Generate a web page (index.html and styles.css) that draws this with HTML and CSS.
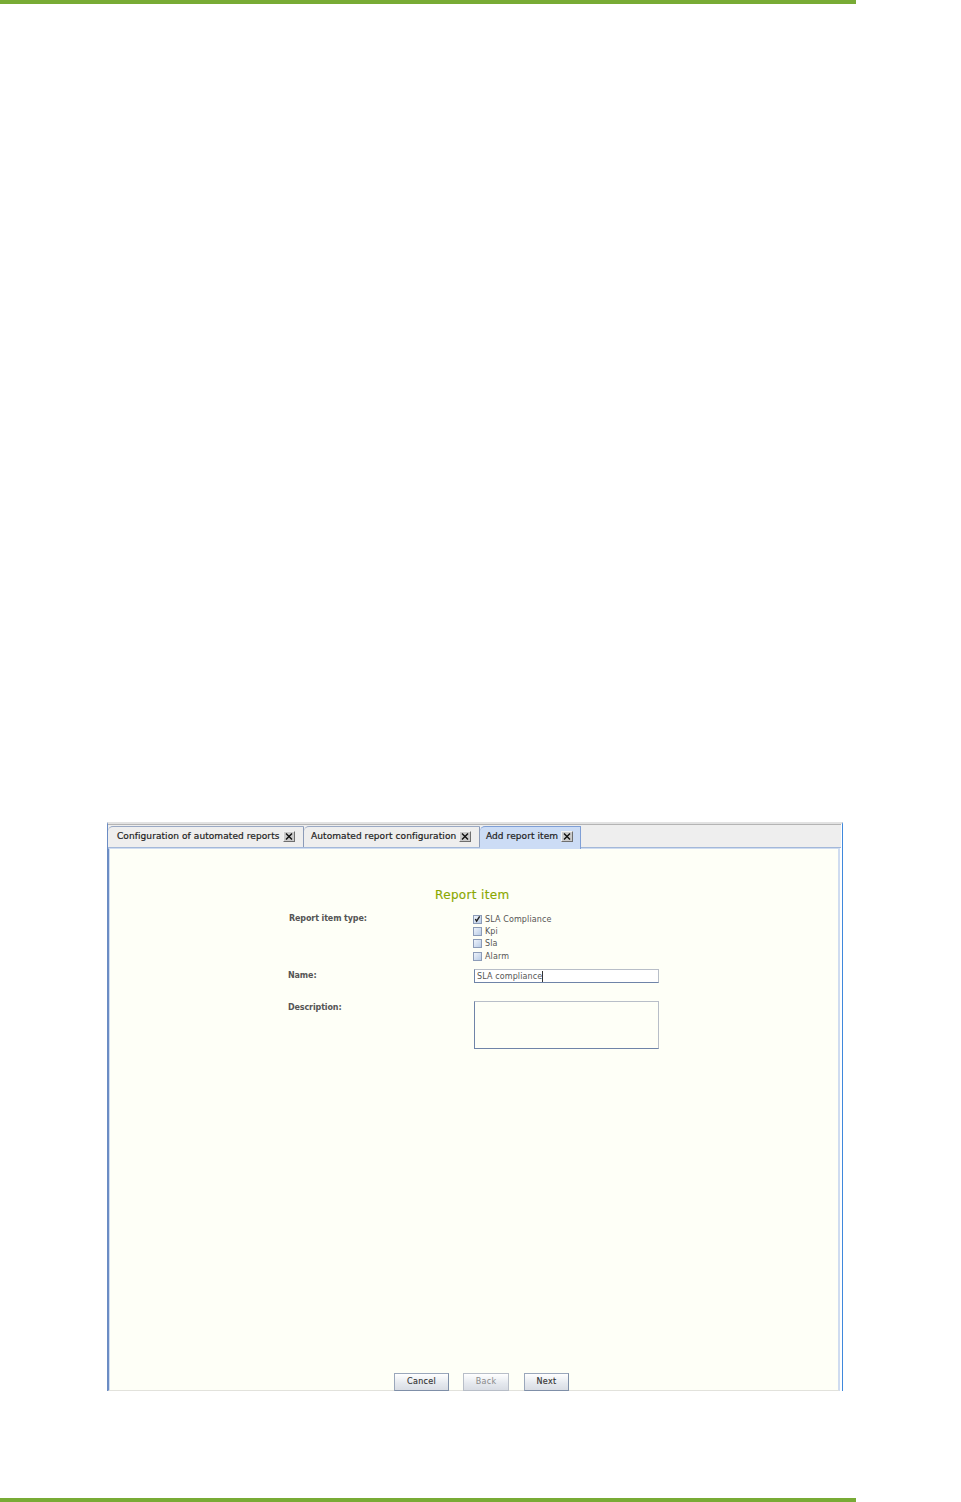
FILE: index.html
```html
<!DOCTYPE html>
<html lang="en">
<head>
<meta charset="utf-8">
<title>Report item</title>
<link rel="stylesheet" href="styles.css">
</head>
<body>
<div class="page">
  <div class="rule"></div>
  <div class="window">
    <div class="tabstrip">
      <div class="tab tab-first"><span class="tab-label">Configuration of automated reports</span><span class="close"><svg width="8" height="7" viewBox="0 0 8 7"><path d="M1 .5 7 6.5M7 .5 1 6.5" fill="none" stroke="#111" stroke-width="1.4"/></svg></span></div>
      <div class="tab tab-second"><span class="tab-label">Automated report configuration</span><span class="close"><svg width="8" height="7" viewBox="0 0 8 7"><path d="M1 .5 7 6.5M7 .5 1 6.5" fill="none" stroke="#111" stroke-width="1.4"/></svg></span></div>
      <div class="tab tab-active"><span class="tab-label">Add report item</span><span class="close"><svg width="8" height="7" viewBox="0 0 8 7"><path d="M1 .5 7 6.5M7 .5 1 6.5" fill="none" stroke="#111" stroke-width="1.4"/></svg></span></div>
    </div>
    <div class="panel">
      <h1 class="title">Report item</h1>
      <div class="form">
        <div class="row row-type">
          <div class="label">Report item type:</div>
          <div class="checks">
            <div class="check"><span class="box box-on"><svg width="8" height="8" viewBox="0 0 8 8"><path d="M1.5 4 3 6.5 6.5 1" fill="none" stroke="#222" stroke-width="1.6"/></svg></span>SLA Compliance</div>
            <div class="check"><span class="box"></span>Kpi</div>
            <div class="check"><span class="box"></span>Sla</div>
            <div class="check"><span class="box"></span>Alarm</div>
          </div>
        </div>
        <div class="row row-name">
          <div class="label">Name:</div>
          <div class="input"><span>SLA compliance</span></div>
        </div>
        <div class="row row-desc">
          <div class="label">Description:</div>
          <div class="textarea"></div>
        </div>
      </div>
      <div class="buttons">
        <div class="btn btn-cancel">Cancel</div>
        <div class="btn btn-back">Back</div>
        <div class="btn btn-next">Next</div>
      </div>
    </div>
  </div>
  <div class="rule"></div>
</div>
</body>
</html>
```
FILE: styles.css
```css
* { box-sizing: border-box; }
html, body { margin: 0; padding: 0; background: #fff; }
body { font-family: "DejaVu Sans", sans-serif; font-size: 9px; color: #333; }
.page { height: 1502px; width: 961px; display: flex; flex-direction: column; overflow: hidden; }
.rule { height: 4px; width: 856px; background: #78ab35; flex: none; }
.window {
  margin: 818px 0 107px 107px;
  width: 736px;
  height: 569px;
  flex: none;
  display: flex;
  flex-direction: column;
  border-top: 2px solid #e2e2e2;
  border-left: 1px solid #6b8cc4;
  border-right: 1px solid #3f88dc;
}
.tabstrip {
  height: 24px;
  flex: none;
  display: flex;
  align-items: flex-start;
  background: #eee;
  border-top: 1px solid #b4b4b4;
  border-bottom: 1px solid #a3b8d9;
  margin-right: 1px;
  padding-top: 1px;
  position: relative;
}
.tab {
  height: 21px;
  flex: none;
  display: flex;
  align-items: center;
  padding-bottom: 2px;
  white-space: nowrap;
  border-top: 1px solid #9aa9c4;
  border-right: 1px solid #8b9bb8;
  color: #222;
  border-top-left-radius: 5px;
  -webkit-text-stroke: 0.2px #222;
  letter-spacing: 0.08px;
}
.tab-first { width: 196px; padding-left: 9px; }
.tab-second { width: 176px; padding-left: 7px; }
.tab-active { width: 101px; height: 23px; padding-left: 6px; padding-bottom: 4px; background: #ccdcf5; border-top-color: #7f9fd6; border-right-color: #7f9fd6; position: relative; z-index: 1; }
.tab-first .close { margin-left: 3px; }
.tab-second .close { margin-left: 3px; }
.close {
  width: 12px; height: 11px; margin-left: 3px; flex: none;
  display: flex; align-items: center; justify-content: center;
  background: #cbcbcb; border: 1px solid; border-color: #f2f2f2 #6e6e6e #6e6e6e #f2f2f2;
  overflow: hidden;
}
.panel {
  flex: 1;
  background: #fefff7;
  border-left: 1px solid #6b8cc4;
  border-top: 1px solid #cfdcf0;
  border-right: 2px solid #cfdcf0;
  border-bottom: 1px solid #e2e2dc;
  box-shadow: inset 1px 0 0 #cfdcf0;
  margin-right: 2px;
  display: flex;
  flex-direction: column;
  align-items: flex-start;
}
.title {
  margin: 39px 0 0 326px;
  font-size: 12px;
  line-height: 14px;
  font-weight: 400;
  color: #8aa800;
  letter-spacing: 0.35px;
  -webkit-text-stroke: 0.15px #8aa800;
}
.form { margin: 10px 0 0 179px; display: flex; flex-direction: column; }
.row { display: flex; align-items: flex-start; }
.label { width: 186px; padding-top: 1px; line-height: 12px; font-weight: 700; color: #555; font-size: 8px; letter-spacing: -0.12px; }
.row-type .label { padding-left: 1px; }
.checks { display: flex; flex-direction: column; margin-left: -1px; padding-top: 1px; }
.check { display: flex; align-items: center; height: 12.4px; font-size: 8px; color: #555; letter-spacing: 0.12px; }
.box {
  width: 9px; height: 9px; margin-right: 3px; flex: none;
  background: linear-gradient(135deg, #eef3fa, #b9cce6);
  border: 1px solid #8c9cb8;
  display: flex; align-items: center; justify-content: center;
  overflow: hidden;
}
.row-name { margin-top: 6px; height: 14px; }
.input {
  width: 185px; height: 14px;
  background: #fff;
  border: 1px solid; border-color: #b8bec8 #b8bec8 #6f84a8 #6f84a8;
  display: flex; align-items: center; padding: 1px 0 0 2px;
  font-size: 8px; color: #555; letter-spacing: 0.12px;
}
.input span { border-right: 1px solid #333; line-height: 11px; }
.row-desc { margin-top: 18px; }
.textarea {
  width: 185px; height: 48px;
  background: #fefff7;
  border: 1px solid; border-color: #b8bec8 #b8bec8 #6f84a8 #6f84a8;
}
.buttons { margin: auto 0 -1px 285px; display: flex; height: 18px; align-items: flex-start; }
.btn {
  height: 18px;
  padding-bottom: 2px;
  display: flex; align-items: center; justify-content: center;
  background: linear-gradient(#fff, #e4e8ee 60%, #d9dde4);
  border: 1px solid; border-color: #9aa7bb #7f8fa8 #7f8fa8 #9aa7bb;
  font-size: 8px; color: #333; -webkit-text-stroke: 0.15px #333; letter-spacing: 0.3px;
}
.btn-cancel { width: 55px; }
.btn-back { width: 46px; margin-left: 14px; color: #888; -webkit-text-stroke: 0; border-color: #b8bec8; }
.btn-next { width: 45px; margin-left: 15px; }
```
